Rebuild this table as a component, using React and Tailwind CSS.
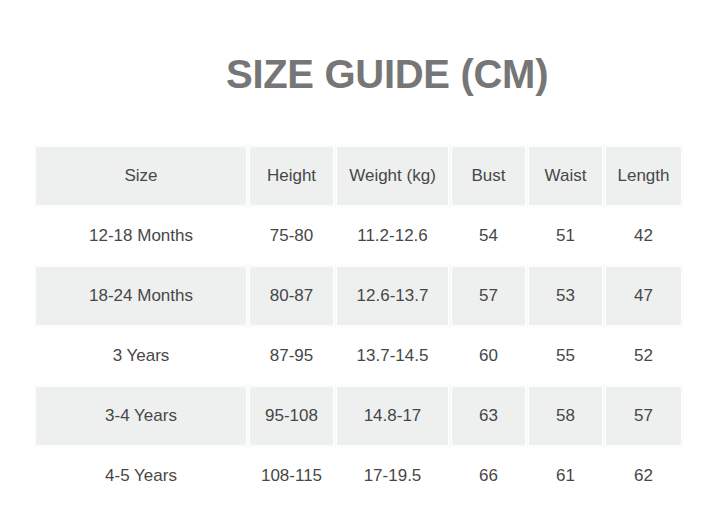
const headers = ["Size", "Height", "Weight (kg)", "Bust", "Waist", "Length"];

const rows = [
  ["12-18 Months", "75-80", "11.2-12.6", "54", "51", "42"],
  ["18-24 Months", "80-87", "12.6-13.7", "57", "53", "47"],
  ["3 Years", "87-95", "13.7-14.5", "60", "55", "52"],
  ["3-4 Years", "95-108", "14.8-17", "63", "58", "57"],
  ["4-5 Years", "108-115", "17-19.5", "66", "61", "62"],
];

const Cell = ({ shaded, children }) => (
  <div
    className={
      "h-[58px] flex items-center justify-center text-[17px] text-[#474747] " +
      (shaded
        ? "bg-[#eef0f0] outline outline-1 outline-offset-1 outline-[#f8f9f9]"
        : "bg-white")
    }
  >
    {children}
  </div>
);

export default function App() {
  return (
    <div
      className="w-[726px] h-[517px] bg-white overflow-hidden"
      style={{ fontFamily: '"Liberation Sans", Arial, sans-serif' }}
    >
      <div className="pt-[54px] pl-[226px]">
        <h1 className="text-[40px] leading-none font-bold text-[#767676] tracking-[-0.3px]">
          SIZE GUIDE (CM)
        </h1>
      </div>
      <div className="mt-[53px] ml-[36px] grid grid-cols-[210px_83px_111px_73px_73px_75px] gap-x-[4px] gap-y-[2px]">
        {headers.map((h) => (
          <Cell key={h} shaded>
            {h}
          </Cell>
        ))}
        {rows.map((r, i) =>
          r.map((v, j) => (
            <Cell key={i + "-" + j} shaded={i % 2 == 1}>
              {v}
            </Cell>
          ))
        )}
      </div>
    </div>
  );
}
